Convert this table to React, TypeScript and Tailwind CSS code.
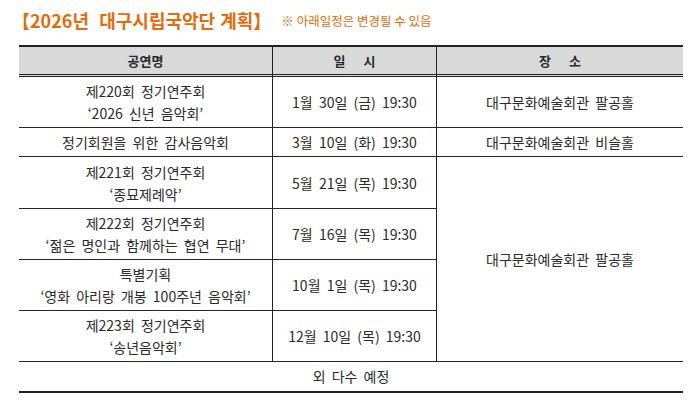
const font = { fontFamily: '"Noto Sans CJK KR", "Noto Sans", sans-serif' };

type Row = { title: string[]; date: string; place?: string; h: string };

const rows: Row[] = [
  { title: ["제220회 정기연주회", "‘2026 신년 음악회’"], date: "1월 30일 (금) 19:30", place: "대구문화예술회관 팔공홀", h: "h-[51px]" },
  { title: ["정기회원을 위한 감사음악회"], date: "3월 10일 (화) 19:30", place: "대구문화예술회관 비슬홀", h: "h-[29px]" },
  { title: ["제221회 정기연주회", "‘종묘제례악’"], date: "5월 21일 (목) 19:30", h: "h-[52px]" },
  { title: ["제222회 정기연주회", "‘젊은 명인과 함께하는 협연 무대’"], date: "7월 16일 (목) 19:30", h: "h-[51px]" },
  { title: ["특별기획", "‘영화 아리랑 개봉 100주년 음악회’"], date: "10월 1일 (목) 19:30", h: "h-[51px]" },
  { title: ["제223회 정기연주회", "‘송년음악회’"], date: "12월 10일 (목) 19:30", h: "h-[51px]" },
];

function Cell({ children, className = "" }: { children: React.ReactNode; className?: string }) {
  return (
    <div className={`flex flex-col items-center justify-center text-center leading-[22px] border-b border-[#262626] ${className}`}>
      {children}
    </div>
  );
}

export default function App() {
  return (
    <div className="w-[700px] h-[411px] bg-white text-[#2a2a2a] overflow-hidden" style={font}>
      <div className="h-[45px] flex items-start pt-[8px] pl-[12px]">
        <span className="text-[18px] font-bold text-[#e46c0a] leading-[24px] [word-spacing:1px]">
          【2026년&nbsp; 대구시립국악단 계획】
        </span>
        <span className="ml-[10px] mt-[4px] text-[12.5px] text-[#e46c0a] leading-[18px]">※ 아래일정은 변경될 수 있음</span>
      </div>

      <div className="ml-[19px] w-[664px] border-t-2 border-[#222] grid grid-cols-[254px_164px_246px] text-[14px] [word-spacing:3px]">
        <div className="h-[30px] bg-[#d9d9d9] border-b-[3px] border-double border-[#222] border-r border-r-[#222] flex items-center justify-center font-bold text-[13px]">
          공연명
        </div>
        <div className="h-[30px] bg-[#d9d9d9] border-b-[3px] border-double border-[#222] border-r border-r-[#222] flex items-center justify-center font-bold text-[13px]">
          일&nbsp;&nbsp;&nbsp;시
        </div>
        <div className="h-[30px] bg-[#d9d9d9] border-b-[3px] border-double border-[#222] flex items-center justify-center font-bold text-[13px]">
          장&nbsp;&nbsp;&nbsp;소
        </div>

        {rows.map((r, i) => (
          <div key={i} className="contents">
            <Cell className={`${r.h} border-r border-r-[#222]`}>
              {r.title.map((t) => (
                <span key={t}>{t}</span>
              ))}
            </Cell>
            <Cell className={`${r.h} border-r border-r-[#222]`}>{r.date}</Cell>
            {r.place && <Cell className={r.h}>{r.place}</Cell>}
            {i === 2 && <Cell className="row-span-4">대구문화예술회관 팔공홀</Cell>}
          </div>
        ))}

        <div className="col-span-3 h-[31px] border-b-2 border-[#222] flex items-center justify-center">외 다수 예정</div>
      </div>
    </div>
  );
}
